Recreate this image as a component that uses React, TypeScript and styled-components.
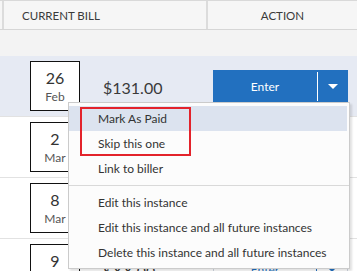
import React from 'react';
import styled, { createGlobalStyle } from 'styled-components';

interface Bill {
  day: string;
  month: string;
  amount: string;
  current?: boolean;
}

const bills: Bill[] = [
  { day: '26', month: 'Feb', amount: '$131.00', current: true },
  { day: '2', month: 'Mar', amount: '$131.00' },
  { day: '8', month: 'Mar', amount: '$131.00' },
  { day: '9', month: 'Mar', amount: '$XX.00' },
];

const menuItems = [
  ['Mark As Paid', 'Skip this one', 'Link to biller'],
  [
    'Edit this instance',
    'Edit this instance and all future instances',
    'Delete this instance and all future instances',
  ],
];

const App: React.FC = () => {
  return (
    <>
      <GlobalStyle />
      <Page>
        <HeaderRow>
          <HeaderCell>Current Bill</HeaderCell>
          <HeaderCell $center>Action</HeaderCell>
        </HeaderRow>
        <Band />
        {bills.map((bill, i) => (
          <Row key={i} $current={bill.current}>
            <BillCell>
              <DateBox>
                <Day>{bill.day}</Day>
                <Month>{bill.month}</Month>
              </DateBox>
              <Amount>{bill.amount}</Amount>
            </BillCell>
            <ActionCell>
              <SplitButton $solid={bill.current}>
                <MainPart>Enter</MainPart>
                <CaretPart>
                  <Caret />
                </CaretPart>
              </SplitButton>
            </ActionCell>
          </Row>
        ))}

        <Menu>
          {menuItems.map((group, gi) => (
            <React.Fragment key={gi}>
              {gi > 0 && <Separator />}
              {group.map((label, li) => (
                <MenuItem key={label} $active={gi === 0 && li === 0}>
                  {label}
                </MenuItem>
              ))}
            </React.Fragment>
          ))}
          <Highlight />
        </Menu>
      </Page>
    </>
  );
};

export default App;

const GlobalStyle = createGlobalStyle`
  html, body {
    margin: 0;
    padding: 0;
    background: #ffffff;
    overflow: hidden;
  }
  body {
    font-family: Lato, "Noto Sans", sans-serif;
    color: #333;
  }
`;

const Page = styled.div`
  position: relative;
  width: 357px;
  height: 271px;
  overflow: hidden;
  background: #fff;
`;

const HeaderRow = styled.div`
  display: grid;
  grid-template-columns: 204px 1fr;
  height: 28px;
  background: #f6f6f6;
  border-top: 1px solid #d9d9d9;
  border-bottom: 1px solid #d6d6d6;
  padding-left: 2px;
`;

const HeaderCell = styled.div<{ $center?: boolean }>`
  display: flex;
  align-items: center;
  justify-content: ${(p) => (p.$center ? 'center' : 'flex-start')};
  padding-left: ${(p) => (p.$center ? '0' : '18px')};
  border-left: 2px solid #dcdcdc;
  font-size: 11.5px;
  text-transform: uppercase;
  color: #3a3a3a;
`;

const Band = styled.div`
  height: 26px;
  background: #f3f3f3;
`;

const Row = styled.div<{ $current?: boolean }>`
  display: grid;
  grid-template-columns: 206px 1fr;
  height: 60px;
  background: ${(p) => (p.$current ? '#e6eaf3' : '#ffffff')};
  border-bottom: 1px solid #e2e2e2;
`;

const BillCell = styled.div`
  display: flex;
  align-items: flex-start;
  padding: 5px 0 0 30px;
`;

const DateBox = styled.div`
  width: 48px;
  height: 48px;
  border: 1px solid #111;
  background: #fff;
  display: flex;
  flex-direction: column;
  align-items: center;
  justify-content: center;
  line-height: 1;
`;

const Day = styled.div`
  font-size: 16px;
  color: #333;
  margin-top: 1px;
`;

const Month = styled.div`
  font-size: 12px;
  color: #555;
  margin-top: 5px;
`;

const Amount = styled.div`
  margin: 17px 0 0 23px;
  font-size: 16px;
  color: #3a3a3a;
`;

const ActionCell = styled.div`
  padding: 14px 9px 0 7px;
`;

const SplitButton = styled.div<{ $solid?: boolean }>`
  display: flex;
  height: 33px;
  background: ${(p) => (p.$solid ? '#2270bf' : '#ffffff')};
  color: ${(p) => (p.$solid ? '#ffffff' : '#2270bf')};
  border: ${(p) => (p.$solid ? 'none' : '1px solid #cfd6e0')};
  box-sizing: border-box;
  font-size: 12px;
`;

const MainPart = styled.div`
  flex: 1;
  display: flex;
  align-items: center;
  justify-content: center;
  border-right: 1px solid currentColor;
  margin: 2px 0;
`;

const CaretPart = styled.div`
  width: 30px;
  display: flex;
  align-items: center;
  justify-content: center;
`;

const Caret = styled.span`
  width: 0;
  height: 0;
  border-left: 5px solid transparent;
  border-right: 5px solid transparent;
  border-top: 5px solid currentColor;
`;

const Menu = styled.div`
  position: absolute;
  left: 68px;
  top: 102px;
  width: 280px;
  padding: 3px 0;
  background: #fcfcfc;
  border: 1px solid #cbcbcb;
  box-shadow: 2px 2px 2px rgba(0, 0, 0, 0.12);
`;

const MenuItem = styled.div<{ $active?: boolean }>`
  height: 25px;
  display: flex;
  align-items: center;
  padding-left: 29px;
  margin-right: 2px;
  font-size: 12px;
  color: #333;
  background: ${(p) => (p.$active ? '#dce3ef' : 'transparent')};
`;

const Separator = styled.div`
  height: 1px;
  margin: 4px 0;
  background: #d9d9d9;
`;

const Highlight = styled.div`
  position: absolute;
  left: 11px;
  top: 4px;
  width: 107px;
  height: 45px;
  border: 2px solid #e3232b;
`;
